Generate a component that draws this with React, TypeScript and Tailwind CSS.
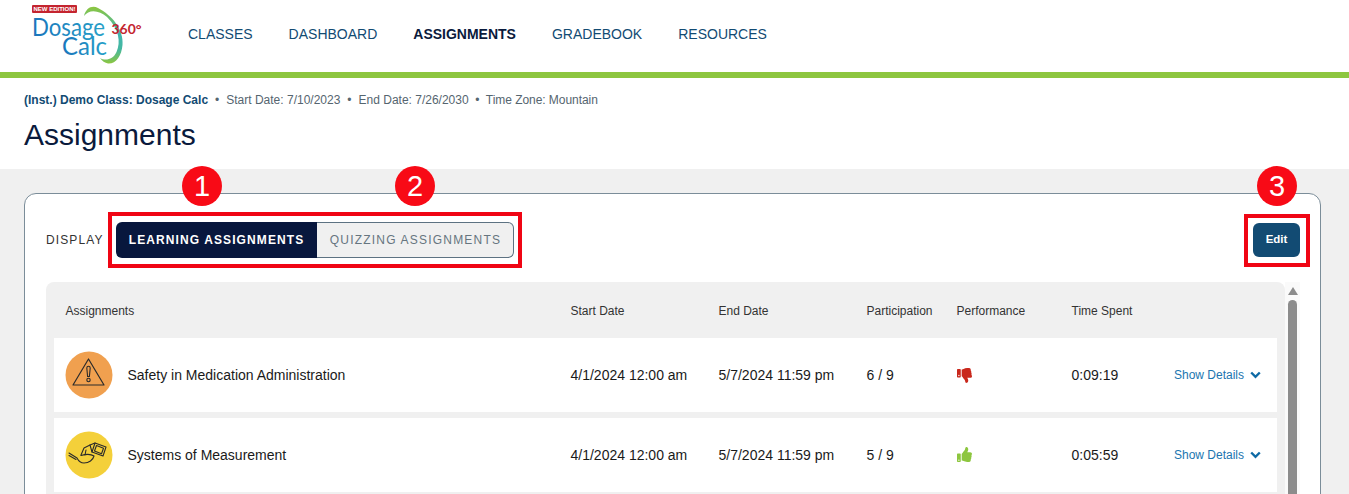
import React from "react";
import { FaThumbsUp, FaThumbsDown } from "react-icons/fa";

const COLS = "grid grid-cols-[516.5px_148px_148px_90px_115px_102.5px_1fr] items-center";

function Logo() {
  return (
    <svg width="120" height="72" viewBox="0 0 120 72" className="absolute left-[28px] top-0">
      <defs>
        <linearGradient id="arc" x1="0" y1="0" x2="0" y2="1">
          <stop offset="0" stopColor="#8dc63f" />
          <stop offset="0.45" stopColor="#3fb5b0" />
          <stop offset="0.75" stopColor="#45b8a0" />
          <stop offset="1" stopColor="#8dc63f" />
        </linearGradient>
        <linearGradient id="txt" x1="0" y1="0" x2="1" y2="0">
          <stop offset="0" stopColor="#1b75bc" />
          <stop offset="1" stopColor="#27a0c8" />
        </linearGradient>
      </defs>
      <path d="M56 16 C 58 8, 64 5, 70 8 C 84 15, 96 30, 94.5 45 C 93.5 56, 88 64, 80 63.5 C 77 63, 74 61, 72 58 C 77 61, 85 60, 88.5 52 C 93 42, 91 29, 79 17 C 71 10, 61 9, 56 16 Z" fill="url(#arc)" />
      <rect x="4" y="5" width="45" height="8" rx="1" fill="#c4242f" />
      <text x="5.5" y="11.3" fontSize="6.2" fontWeight="700" fill="#fff" fontFamily="'Liberation Sans', sans-serif" textLength="42" lengthAdjust="spacingAndGlyphs">NEW EDITION!</text>
      <text x="4" y="35.5" fontSize="25" fill="url(#txt)" fontFamily="Lato, sans-serif" textLength="73" lengthAdjust="spacingAndGlyphs">Dosage</text>
      <text x="34" y="55" fontSize="25" fill="url(#txt)" fontFamily="Lato, sans-serif" textLength="45" lengthAdjust="spacingAndGlyphs">Calc</text>
      <text x="83.5" y="34" fontSize="14" fontWeight="700" fill="#c4242f" fontFamily="Lato, sans-serif" textLength="30" lengthAdjust="spacingAndGlyphs">360°</text>
    </svg>
  );
}

function WarningIcon() {
  return (
    <svg width="48" height="48" viewBox="0 0 48 48" className="shrink-0">
      <circle cx="24" cy="24" r="23.5" fill="#f0a04f" />
      <path d="M23.5 8 L39 34 L8 34 Z" fill="none" stroke="#2b2b2b" strokeWidth="1.2" strokeLinejoin="round" />
      <path d="M21.8 17 a1.7 1.7 0 0 1 3.4 0 L24.4 25.5 h-1.8 Z" fill="none" stroke="#2b2b2b" strokeWidth="1.1" />
      <circle cx="23.5" cy="29" r="1.7" fill="none" stroke="#2b2b2b" strokeWidth="1.1" />
    </svg>
  );
}

function MeasureIcon() {
  return (
    <svg width="48" height="48" viewBox="0 0 48 48" className="shrink-0">
      <circle cx="24" cy="24" r="23.5" fill="#f4d03a" />
      <g fill="none" stroke="#2b2b2b" strokeWidth="1.1" strokeLinejoin="round" strokeLinecap="round">
        <path d="M30 12 L41 16 L38 25 L27 21 Z" />
        <path d="M31.5 14.5 L38.5 17.2 L36.5 22.8 L29.5 20 Z" />
        <path d="M30 12 L25 14 L19 17 L16 24" />
        <path d="M25 14 L27 21" />
        <path d="M21 19 L20 24" />
        <path d="M16 24.5 C 21 23, 26 23, 29 25 C 28 29, 24 32, 19 32 C 15 32, 13 29, 12 27 L4 22" />
        <path d="M4 24.5 L11 28.5" />
      </g>
    </svg>
  );
}

function Row({ icon, name, start, end, part, good, time }: { icon: React.ReactNode; name: string; start: string; end: string; part: string; good: boolean; time: string }) {
  return (
    <div className={`${COLS} h-[74px] bg-white text-[14px] text-[#1a1a1a]`}>
      <div className="flex items-center gap-[14.5px] pl-[11px]">
        {icon}
        <span>{name}</span>
      </div>
      <div>{start}</div>
      <div>{end}</div>
      <div>{part}</div>
      <div className="text-[15px]">
        {good ? <FaThumbsUp className="mb-[2px] text-[#8dc63f]" /> : <FaThumbsDown className="text-[#c9281c]" />}
      </div>
      <div>{time}</div>
      <div className="flex items-center gap-[6px] text-[12px] text-[#1b75b0]">
        <span>Show Details</span>
        <svg width="11" height="8" viewBox="0 0 11 8">
          <path d="M1.2 1.5 L5.5 5.8 L9.8 1.5" fill="none" stroke="#0f6aa5" strokeWidth="2.4" />
        </svg>
      </div>
    </div>
  );
}

function Badge({ n, cls }: { n: string; cls: string }) {
  return (
    <div className={`absolute top-[-28px] flex h-[40px] w-[40px] items-center justify-center rounded-full bg-[#f80a16] text-[29px] leading-none text-white ${cls}`}>
      {n}
    </div>
  );
}

export default function App() {
  return (
    <div className="h-[494px] overflow-hidden bg-white font-['Liberation_Sans',Arial,sans-serif]">
      <header className="relative flex h-[72px] items-center pb-[4px] pl-[188px] text-[14px] text-[#124b73]">
        <Logo />
        <nav className="flex items-center gap-[36px]">
          <span>CLASSES</span>
          <span>DASHBOARD</span>
          <span className="font-bold text-[#0a1a3c]">ASSIGNMENTS</span>
          <span>GRADEBOOK</span>
          <span>RESOURCES</span>
        </nav>
      </header>
      <div className="h-[6px] bg-[#8dc63f]" />
      <div className="h-[91px] px-[24px] pt-[15px]">
        <div className="flex items-center text-[12px] leading-[14px] text-[#55656f]">
          <span className="font-bold text-[#124b73]">(Inst.) Demo Class: Dosage Calc</span>
          <span className="px-[7px]">•</span>
          <span>Start Date: 7/10/2023</span>
          <span className="px-[7px]">•</span>
          <span>End Date: 7/26/2030</span>
          <span className="px-[6.5px]">•</span>
          <span className="tracking-[-0.05px]">Time Zone: Mountain</span>
        </div>
        <h1 className="mt-[10px] text-[30px] leading-[36px] text-[#0a1a3c]">Assignments</h1>
      </div>
      <main className="h-[400px] bg-[#f0f0f0] pl-[24px] pr-[28px] pt-[24px]">
        <section className="relative h-[400px] rounded-[12px] border border-[#7b8d99] bg-white pl-[21px] pr-[20px] pt-[28px]">
          <Badge n="1" cls="left-[157px]" />
          <Badge n="2" cls="left-[370px]" />
          <Badge n="3" cls="left-[1232px]" />
          <div className="flex h-[36px] items-center justify-between">
            <div className="flex items-center">
              <span className="mr-[12px] text-[12px] tracking-[1.1px] text-[#333]">DISPLAY</span>
              <div className="relative flex h-[36px] text-[12px] font-bold tracking-[1.1px]">
                <div className="absolute -inset-x-[8px] -inset-y-[10px] border-4 border-[#f00514]" />
                <div className="flex w-[201px] items-center justify-center rounded-l-[6px] bg-[#08173d] pl-[1px] text-white">LEARNING ASSIGNMENTS</div>
                <div className="flex w-[197px] items-center justify-center rounded-r-[6px] border border-l-0 border-[#5d7282] bg-[#f0f0f0] pl-[2px] font-normal tracking-[1.2px] text-[#66757f]">QUIZZING ASSIGNMENTS</div>
              </div>
            </div>
            <div className="relative flex h-[34px] w-[47px] items-center justify-center rounded-[6px] bg-[#124b73] text-[11.5px] font-bold text-white">
              <div className="absolute -inset-x-[9.5px] -inset-y-[9.5px] border-4 border-[#f00514]" />
              Edit
            </div>
          </div>
          <div className="mt-[24px] flex">
            <div className="w-[1239px] rounded-t-[8px] bg-[#f0f0f0] px-[8px]">
              <div className={`${COLS} h-[56px] pt-[2px] text-[12px] text-[#333]`}>
                <div className="pl-[11.5px]">Assignments</div>
                <div>Start Date</div>
                <div>End Date</div>
                <div>Participation</div>
                <div>Performance</div>
                <div>Time Spent</div>
                <div />
              </div>
              <div className="flex flex-col gap-[6px]">
                <Row icon={<WarningIcon />} name="Safety in Medication Administration" start="4/1/2024 12:00 am" end="5/7/2024 11:59 pm" part="6 / 9" good={false} time="0:09:19" />
                <Row icon={<MeasureIcon />} name="Systems of Measurement" start="4/1/2024 12:00 am" end="5/7/2024 11:59 pm" part="5 / 9" good time="0:05:59" />
              </div>
            </div>
            <div className="flex w-[15px] flex-col items-center bg-[#fafafa] pt-[5px]">
              <svg width="10" height="8" viewBox="0 0 10 8"><path d="M5 0 L10 8 H0 Z" fill="#8c8c8c" /></svg>
              <div className="mt-[5px] h-[300px] w-[9px] rounded-t-full bg-[#8c8c8c]" />
            </div>
          </div>
        </section>
      </main>
    </div>
  );
}
